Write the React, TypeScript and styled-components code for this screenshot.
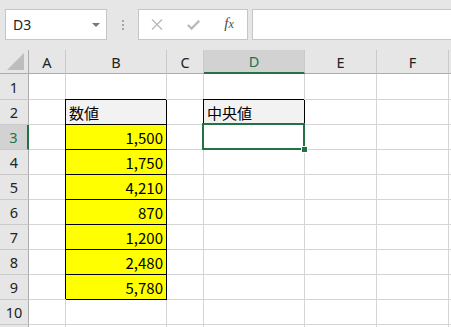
import React from "react";
import styled, { createGlobalStyle, css } from "styled-components";

const GREEN = "#217346";
const GRID = "#d4d4d4";

const GlobalStyle = createGlobalStyle`
  html, body {
    margin: 0;
    padding: 0;
    background: #ffffff;
    overflow: hidden;
  }
`;

const columns = ["A", "B", "C", "D", "E", "F", ""];
const values = ["1,500", "1,750", "4,210", "870", "1,200", "2,480", "5,780"];

const App: React.FC = () => {
  const rows = Array.from({ length: 11 }, (_, i) => i + 1);

  return (
    <Page>
      <GlobalStyle />
      <TopBar>
        <NameBox>
          <span>D3</span>
          <DropArrow />
        </NameBox>
        <Grip>
          <i />
          <i />
          <i />
        </Grip>
        <FxGroup>
          <FxButton>
            <svg width="12" height="11" viewBox="0 0 12 11">
              <path d="M1 0.5 L11 10.5 M11 0.5 L1 10.5" stroke="#b8b8b8" strokeWidth="1.3" fill="none" />
            </svg>
          </FxButton>
          <FxButton>
            <svg width="13" height="10" viewBox="0 0 13 10">
              <path d="M0.8 5 L4.6 8.6 L12.2 0.8" stroke="#b8b8b8" strokeWidth="2.2" fill="none" />
            </svg>
          </FxButton>
          <FxLabel>
            f<small>x</small>
          </FxLabel>
        </FxGroup>
        <FormulaInput />
      </TopBar>

      <Sheet>
        <Corner>
          <svg width="18" height="18" viewBox="0 0 18 18">
            <path d="M17 0 L17 17 L0 17 Z" fill="#bdbdbd" />
          </svg>
        </Corner>
        {columns.map((c) => (
          <ColHeader key={c || "end"} $active={c === "D"}>
            {c}
          </ColHeader>
        ))}

        {rows.map((r) => (
          <React.Fragment key={r}>
            {/* row 11 is only a sliver at the bottom edge, so no number */}
            <RowHeader $active={r === 3}>{r <= 10 ? r : ""}</RowHeader>
            {columns.map((c) => {
              const key = `${c}${r}`;
              if (c === "B" && r === 2) {
                return (
                  <Cell key={key} $fill="#f2f2f2" $boxed>
                    数値
                  </Cell>
                );
              }
              if (c === "D" && r === 2) {
                return (
                  <Cell key={key} $fill="#f2f2f2" $boxed>
                    中央値
                  </Cell>
                );
              }
              if (c === "B" && r >= 3 && r <= 9) {
                return (
                  <Cell key={key} $fill="#ffff00" $boxed $right>
                    {values[r - 3]}
                  </Cell>
                );
              }
              if (c === "D" && r === 3) {
                return <Cell key={key} $selected />;
              }
              return <Cell key={key} />;
            })}
          </React.Fragment>
        ))}
      </Sheet>
    </Page>
  );
};

export default App;

const Page = styled.div`
  width: 451px;
  height: 327px;
  overflow: hidden;
  background: #e6e6e6;
`;

const TopBar = styled.div`
  height: 50px;
  box-sizing: border-box;
  padding: 9px 0 0 5px;
  display: flex;
  align-items: flex-start;
`;

const NameBox = styled.div`
  width: 102px;
  height: 31px;
  box-sizing: border-box;
  background: #ffffff;
  border: 1px solid #c6c6c6;
  display: flex;
  align-items: center;
  justify-content: space-between;
  padding: 0 6px 0 7px;
  font-family: "Noto Sans", "Open Sans", sans-serif;
  font-size: 14px;
  color: #222;
`;

const DropArrow = styled.div`
  width: 0;
  height: 0;
  border-left: 4px solid transparent;
  border-right: 4px solid transparent;
  border-top: 4px solid #777777;
`;

const Grip = styled.div`
  width: 31px;
  height: 31px;
  display: flex;
  flex-direction: column;
  align-items: center;
  justify-content: center;
  gap: 2px;

  i {
    display: block;
    width: 2px;
    height: 2px;
    background: #a6a6a6;
  }
`;

const FxGroup = styled.div`
  width: 110px;
  height: 31px;
  box-sizing: border-box;
  background: #ffffff;
  border: 1px solid #c6c6c6;
  display: flex;
  align-items: center;
  padding-left: 0;
`;

const FxButton = styled.div`
  width: 36px;
  display: flex;
  justify-content: center;
  align-items: center;
`;

const FxLabel = styled.div`
  width: 36px;
  text-align: center;
  font-family: "Liberation Serif", "DejaVu Serif", serif;
  font-style: italic;
  font-size: 15px;
  color: #4a4a4a;
  margin-top: -2px;

  small {
    font-size: 12px;
  }
`;

const FormulaInput = styled.div`
  flex: 1;
  height: 31px;
  box-sizing: border-box;
  background: #ffffff;
  border: 1px solid #c6c6c6;
  border-right: none;
  margin-left: 4px;
`;

const Sheet = styled.div`
  display: grid;
  grid-template-columns: 29px 37px 101px 37px 101px 72px 72px 1fr;
  grid-template-rows: 24px 26px repeat(10, 25px);
  background: #ffffff;
`;

const headerBase = css`
  box-sizing: border-box;
  background: #e6e6e6;
  display: flex;
  align-items: center;
  justify-content: center;
  font-family: "Noto Sans", "Open Sans", sans-serif;
  font-size: 14.5px;
  color: #222222;
  overflow: hidden;
`;

const Corner = styled.div`
  ${headerBase};
  border-right: 1px solid #ababab;
  border-bottom: 1px solid #ababab;
  align-items: flex-end;
  justify-content: flex-end;
  padding: 0 3px 2px 0;
`;

const ColHeader = styled.div<{ $active?: boolean }>`
  ${headerBase};
  border-right: 1px solid #cacaca;
  border-bottom: 1px solid #ababab;
  ${(p) =>
    p.$active &&
    css`
      background: #d2d2d2;
      color: ${GREEN};
      border-bottom: 2px solid ${GREEN};
    `}
`;

const RowHeader = styled.div<{ $active?: boolean }>`
  ${headerBase};
  border-right: 1px solid #ababab;
  border-bottom: 1px solid #cacaca;
  ${(p) =>
    p.$active &&
    css`
      background: #d2d2d2;
      color: ${GREEN};
      border-right: 2px solid ${GREEN};
    `}
`;

const Cell = styled.div<{
  $fill?: string;
  $boxed?: boolean;
  $right?: boolean;
  $selected?: boolean;
}>`
  box-sizing: border-box;
  border-right: 1px solid ${GRID};
  border-bottom: 1px solid ${GRID};
  background: ${(p) => p.$fill || "#ffffff"};
  display: flex;
  align-items: center;
  justify-content: ${(p) => (p.$right ? "flex-end" : "flex-start")};
  padding: 0 3px 0 3px;
  font-family: "Noto Sans CJK JP", "Noto Sans", sans-serif;
  font-size: 15px;
  line-height: 1;
  color: #000000;
  white-space: nowrap;

  ${(p) =>
    p.$boxed &&
    css`
      border-right-color: #000000;
      border-bottom-color: #000000;
      box-shadow: -1px -1px 0 0 #000000;
    `}

  ${(p) =>
    p.$selected &&
    css`
      position: relative;

      &::after {
        content: "";
        position: absolute;
        top: -2px;
        left: -2px;
        right: -1px;
        bottom: -1px;
        border: 2px solid ${GREEN};
      }

      &::before {
        content: "";
        position: absolute;
        z-index: 1;
        right: -4px;
        bottom: -4px;
        width: 5px;
        height: 5px;
        background: ${GREEN};
        border: 1px solid #ffffff;
      }
    `}
`;
